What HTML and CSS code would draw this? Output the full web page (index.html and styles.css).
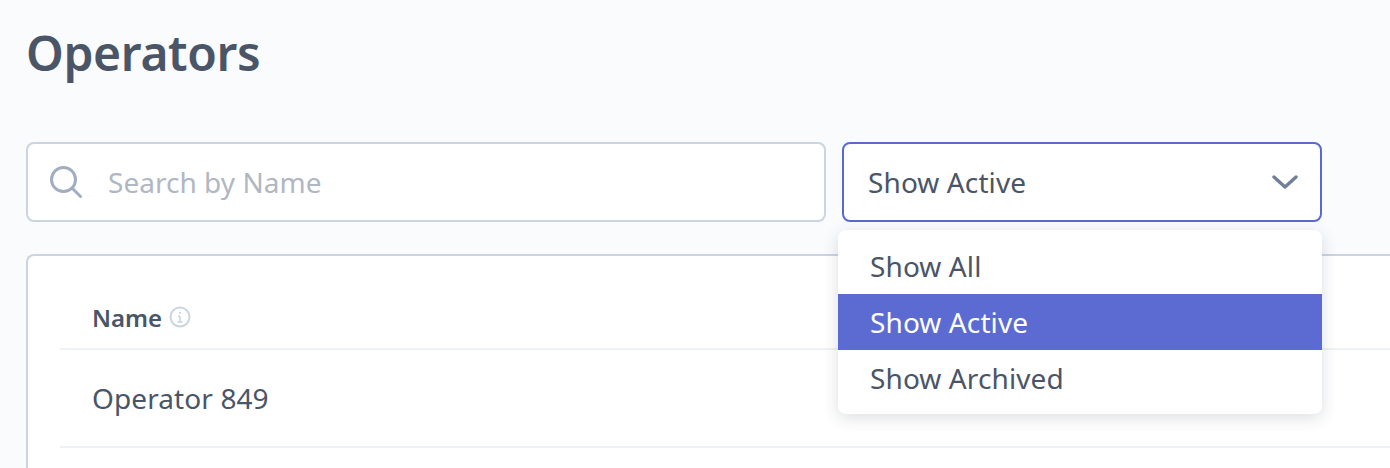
FILE: index.html
```html
<!DOCTYPE html>
<html>
  <head>
    <meta charset="UTF-8">
    <title>Operators</title>
    <link rel="stylesheet" href="styles.css">
  </head>
  <body>
    <h1 class="title">Operators</h1>

    <div class="filters">
      <div class="search">
        <svg class="search-icon" width="36" height="36" viewBox="0 0 36 36" fill="none" stroke="#a0aec0" stroke-width="3">
          <circle cx="13.5" cy="15.5" r="12"></circle>
          <path d="M22.5 24.5l8 8" stroke-linecap="round"></path>
        </svg>
        <span class="placeholder">Search by Name</span>
      </div>
      <div class="select">
        <span>Show Active</span>
        <svg width="26" height="16" viewBox="0 0 26 16" fill="none" stroke="#718096" stroke-width="3.4" stroke-linecap="round" stroke-linejoin="round">
          <path d="M2 3l11 10 11-10"></path>
        </svg>
      </div>
      <ul class="menu">
        <li>Show All</li>
        <li class="selected">Show Active</li>
        <li>Show Archived</li>
      </ul>
    </div>

    <div class="card">
      <div class="head-row">
        <span>Name</span>
        <svg width="22" height="22" viewBox="0 0 22 22" fill="none" stroke="#cbd5e0" stroke-width="2">
          <circle cx="11" cy="11" r="9.5"></circle>
          <path d="M11 10v6M8.5 16h5M9 10h2" stroke-width="1.6"></path>
          <path d="M11 6v1.8" stroke-width="2"></path>
        </svg>
      </div>
      <div class="row">Operator 849</div>
    </div>
  </body>
</html>
```

FILE: styles.css
```css
html { margin: 0; padding: 0; background-color: #fafbfd; }
body { margin: 0; padding: 24px 0 0 26px; height: 468px; box-sizing: border-box; overflow: hidden;
       font-family: "Noto Sans", sans-serif; color: #4a5568; }

.title { margin: 0 0 60px 0; font-size: 48px; line-height: 58px; font-weight: 600; letter-spacing: -.35px; }

.filters { display: flex; gap: 16px; position: relative; margin-bottom: 32px; }

.search, .select { box-sizing: border-box; height: 80px; background-color: white; border-radius: 8px;
                   display: flex; align-items: center; font-size: 28px; letter-spacing: .1px; }
.search { width: 800px; border: 2px solid #cbd5e0; padding-left: 22px; gap: 22px; }
.search-icon { flex: none; }
.placeholder { color: #b0b7c3; letter-spacing: .03px; }
.select { width: 480px; border: 2px solid #5a69d0; padding: 0 22px 0 24px; justify-content: space-between; }

.menu { position: absolute; top: 88px; left: 812px; width: 484px; margin: 0; padding: 8px 0; list-style: none;
        background-color: white; border-radius: 8px; box-shadow: 0 4px 16px rgba(40, 50, 70, .16);
        font-size: 28px; letter-spacing: .1px; }
.menu li { height: 56px; line-height: 56px; padding-left: 32px; }
.menu li.selected { background-color: #5c6bd1; color: white; }

.card { box-sizing: border-box; height: 220px; margin-right: 0; padding: 0 0 0 32px; background-color: white;
        border: 2px solid #cbd5e0; border-right: 0; border-bottom: 0; border-radius: 8px 0 0 0; }
.head-row { display: flex; align-items: center; gap: 7px; height: 94px; padding: 30px 0 0 32px; box-sizing: border-box;
            font-size: 24px; font-weight: 600; border-bottom: 2px solid #edf2f7; }
.row { height: 98px; padding: 0 0 2px 32px; line-height: 96px; box-sizing: border-box; font-size: 28px;
       letter-spacing: .1px; border-bottom: 2px solid #edf2f7; }
```
